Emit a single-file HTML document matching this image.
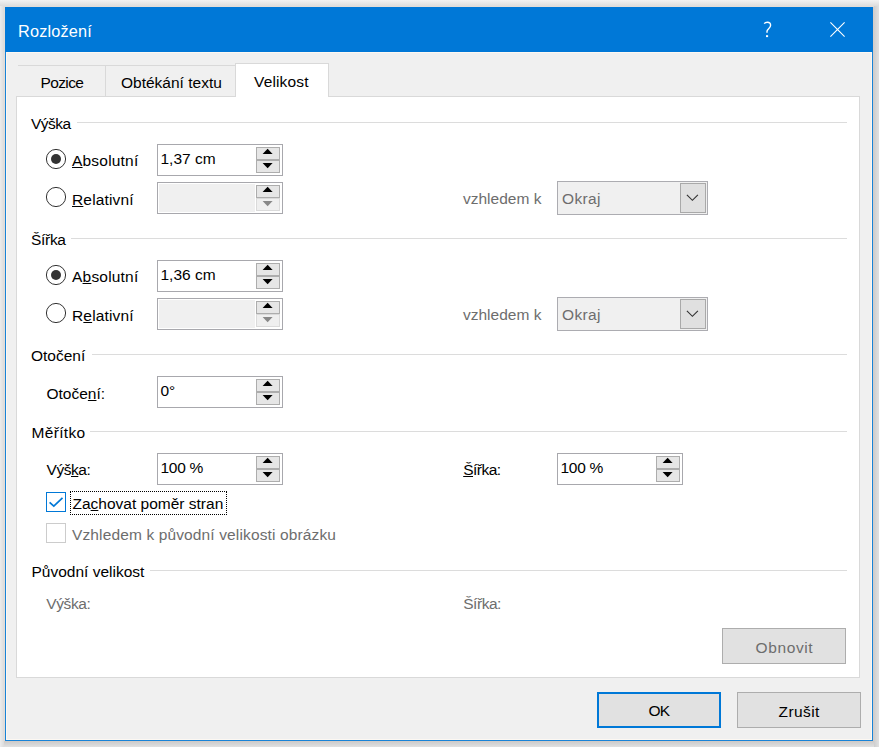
<!DOCTYPE html>
<html><head><meta charset="utf-8"><style>
html,body{margin:0;padding:0;}
body{width:879px;height:747px;position:relative;overflow:hidden;background:#efefef;font-family:"Liberation Sans",sans-serif;}
.t{position:absolute;white-space:nowrap;}
.b{position:absolute;}
u{text-decoration:underline;text-underline-offset:1px;text-decoration-thickness:1px;}
</style></head><body>
<div class="b" style="left:0px;top:0px;width:879px;height:6px;background:linear-gradient(to bottom,#f2f2f2,#dddddd);"></div>
<div class="b" style="left:0px;top:6px;width:4px;height:741px;background:linear-gradient(to right,#ececec,#dcdcdc);"></div>
<div class="b" style="left:874px;top:6px;width:5px;height:741px;background:linear-gradient(to right,#cfcfcf,#e1e1e1);"></div>
<div class="b" style="left:4px;top:742px;width:870px;height:5px;background:linear-gradient(to bottom,#cecece,#e0e0e0);"></div>
<div class="b" style="left:4px;top:6px;width:870px;height:736px;background:#e3ddd8;"></div>
<div class="b" style="left:873px;top:7px;width:1px;height:735px;background:#d5cdc8;"></div>
<div class="b" style="left:4px;top:741px;width:870px;height:1px;background:#d3cbc6;"></div>
<div class="b" style="left:5px;top:7px;width:868px;height:734px;background:#1883d7;"></div>
<div class="b" style="left:5px;top:7px;width:868px;height:45px;background:#0078d7;"></div>
<div class="b" style="left:6px;top:52px;width:866px;height:688px;background:#fdf8f2;"></div>
<div class="b" style="left:7px;top:53px;width:864px;height:686px;background:#f0f0f0;"></div>
<div class="t" style="left:18.00px;top:23.16px;font-size:16.3px;line-height:16.3px;color:#fff;letter-spacing:0.17px;">Rozložení</div>
<svg class="b" style="left:756px;top:18px" width="24" height="24" viewBox="0 0 24 24"><path d="M8.2 5.7 C9 4.6 10.1 4.2 11.3 4.2 C13.2 4.2 14.6 5.5 14.6 7.3 C14.6 9.2 13.3 10.2 12.2 11.2 C11.3 12 11 12.7 11 13.6 L11 14.7" fill="none" stroke="#fff" stroke-width="1.4"/><rect x="10" y="17.2" width="2.1" height="1.9" fill="#fff"/></svg>
<svg class="b" style="left:829px;top:21px" width="18" height="18" viewBox="0 0 18 18"><path d="M1.4 1.4 L15.6 15.6 M15.6 1.4 L1.4 15.6" stroke="#fff" stroke-width="1.1"/></svg>
<div class="b" style="left:18px;top:65px;width:218px;height:1px;background:#d9d9d9;"></div>
<div class="b" style="left:105px;top:65px;width:1px;height:32px;background:#d9d9d9;"></div>
<div class="b" style="left:16px;top:96px;width:844px;height:582px;background:#fff;box-sizing:border-box;border:1px solid #d9d9d9;"></div>
<div class="b" style="left:235px;top:63px;width:94px;height:34px;background:#fff;box-sizing:border-box;border:1px solid #d9d9d9;border-bottom:none;"></div>
<div class="b" style="left:236px;top:96px;width:92px;height:2px;background:#fff;"></div>
<div class="t" style="left:40.50px;top:74.63px;font-size:15.5px;line-height:15.5px;color:#000;letter-spacing:-0.62px;">Pozice</div>
<div class="t" style="left:121.00px;top:74.63px;font-size:15.5px;line-height:15.5px;color:#000;">Obtékání textu</div>
<div class="t" style="left:254.00px;top:73.83px;font-size:15.5px;line-height:15.5px;color:#000;letter-spacing:0.15px;">Velikost</div>
<div class="t" style="left:31.00px;top:116.23px;font-size:15.5px;line-height:15.5px;color:#000;letter-spacing:-0.5px;">Výška</div>
<div class="b" style="left:77px;top:122px;width:770px;height:1px;background:#dcdcdc;"></div>
<svg class="b" style="left:45px;top:148px" width="22" height="22" viewBox="0 0 22 22"><circle cx="11" cy="11" r="9.6" fill="#fff" stroke="#333" stroke-width="1"/><circle cx="11" cy="11" r="5" fill="#333"/></svg>
<svg class="b" style="left:45px;top:186px" width="22" height="22" viewBox="0 0 22 22"><circle cx="11" cy="11" r="9.6" fill="#fff" stroke="#333" stroke-width="1"/></svg>
<div class="t" style="left:72.00px;top:153.43px;font-size:15.5px;line-height:15.5px;color:#000;letter-spacing:0.2px;"><u>A</u>bsolutní</div>
<div class="t" style="left:72.00px;top:191.63px;font-size:15.5px;line-height:15.5px;color:#000;letter-spacing:0.16px;"><u>R</u>elativní</div>
<div class="b" style="left:157px;top:144px;width:126px;height:32px;background:#fff;box-sizing:border-box;border:1px solid #a8a8ad;"></div>
<div class="b" style="left:256px;top:147px;width:24px;height:13px;background:#e6e6e6;box-sizing:border-box;border:1px solid #adadad;"></div>
<div class="b" style="left:256px;top:160px;width:24px;height:13px;background:#e6e6e6;box-sizing:border-box;border:1px solid #adadad;"></div>
<svg class="b" style="left:256px;top:144px" width="24" height="32" viewBox="0 0 24 32"><path d="M6.6 10.1 L11.6 4.8 L16.6 10.1 Z" fill="#000"/><path d="M6.6 19 L16.6 19 L11.6 24.3 Z" fill="#000"/></svg>
<div class="t" style="left:160.50px;top:150.93px;font-size:15.5px;line-height:15.5px;color:#000;">1,37 cm</div>
<div class="b" style="left:157px;top:182px;width:126px;height:32px;background:#fff;box-sizing:border-box;border:1px solid #a8a8ad;"></div>
<div class="b" style="left:159px;top:184px;width:96px;height:28px;background:#f0f0f0;"></div>
<div class="b" style="left:256px;top:185px;width:24px;height:13px;background:#e6e6e6;box-sizing:border-box;border:1px solid #adadad;"></div>
<div class="b" style="left:256px;top:198px;width:24px;height:13px;background:#efefef;box-sizing:border-box;border:1px solid #dadada;"></div>
<svg class="b" style="left:256px;top:182px" width="24" height="32" viewBox="0 0 24 32"><path d="M6.6 10.1 L11.6 4.8 L16.6 10.1 Z" fill="#000"/><path d="M6.6 19 L16.6 19 L11.6 24.3 Z" fill="#888"/></svg>
<div class="t" style="left:463.00px;top:190.73px;font-size:15.5px;line-height:15.5px;color:#6d6d6d;">vzhledem k</div>
<div class="b" style="left:557px;top:181px;width:151px;height:34px;background:#f0f0f0;box-sizing:border-box;border:1px solid #acacb1;"></div>
<div class="b" style="left:680px;top:183px;width:26px;height:30px;background:#e0e0e0;box-sizing:border-box;border:1px solid #a9a9a9;"></div>
<svg class="b" style="left:680px;top:181px" width="26" height="34" viewBox="0 0 26 34"><path d="M6.9 13.9 L12.4 19.3 L17.9 13.9" fill="none" stroke="#333" stroke-width="1.15"/></svg>
<div class="t" style="left:562.00px;top:190.83px;font-size:15.5px;line-height:15.5px;color:#6d6d6d;letter-spacing:0.37px;">Okraj</div>
<div class="t" style="left:31.00px;top:232.23px;font-size:15.5px;line-height:15.5px;color:#000;letter-spacing:-0.3px;">Šířka</div>
<div class="b" style="left:71px;top:238px;width:776px;height:1px;background:#dcdcdc;"></div>
<svg class="b" style="left:45px;top:264px" width="22" height="22" viewBox="0 0 22 22"><circle cx="11" cy="11" r="9.6" fill="#fff" stroke="#333" stroke-width="1"/><circle cx="11" cy="11" r="5" fill="#333"/></svg>
<svg class="b" style="left:45px;top:302px" width="22" height="22" viewBox="0 0 22 22"><circle cx="11" cy="11" r="9.6" fill="#fff" stroke="#333" stroke-width="1"/></svg>
<div class="t" style="left:72.00px;top:269.43px;font-size:15.5px;line-height:15.5px;color:#000;letter-spacing:0.2px;">A<u>b</u>solutní</div>
<div class="t" style="left:72.00px;top:307.63px;font-size:15.5px;line-height:15.5px;color:#000;letter-spacing:0.16px;">R<u>e</u>lativní</div>
<div class="b" style="left:157px;top:260px;width:126px;height:32px;background:#fff;box-sizing:border-box;border:1px solid #a8a8ad;"></div>
<div class="b" style="left:256px;top:263px;width:24px;height:13px;background:#e6e6e6;box-sizing:border-box;border:1px solid #adadad;"></div>
<div class="b" style="left:256px;top:276px;width:24px;height:13px;background:#e6e6e6;box-sizing:border-box;border:1px solid #adadad;"></div>
<svg class="b" style="left:256px;top:260px" width="24" height="32" viewBox="0 0 24 32"><path d="M6.6 10.1 L11.6 4.8 L16.6 10.1 Z" fill="#000"/><path d="M6.6 19 L16.6 19 L11.6 24.3 Z" fill="#000"/></svg>
<div class="t" style="left:160.50px;top:266.93px;font-size:15.5px;line-height:15.5px;color:#000;">1,36 cm</div>
<div class="b" style="left:157px;top:298px;width:126px;height:32px;background:#fff;box-sizing:border-box;border:1px solid #a8a8ad;"></div>
<div class="b" style="left:159px;top:300px;width:96px;height:28px;background:#f0f0f0;"></div>
<div class="b" style="left:256px;top:301px;width:24px;height:13px;background:#e6e6e6;box-sizing:border-box;border:1px solid #adadad;"></div>
<div class="b" style="left:256px;top:314px;width:24px;height:13px;background:#efefef;box-sizing:border-box;border:1px solid #dadada;"></div>
<svg class="b" style="left:256px;top:298px" width="24" height="32" viewBox="0 0 24 32"><path d="M6.6 10.1 L11.6 4.8 L16.6 10.1 Z" fill="#000"/><path d="M6.6 19 L16.6 19 L11.6 24.3 Z" fill="#888"/></svg>
<div class="t" style="left:463.00px;top:306.73px;font-size:15.5px;line-height:15.5px;color:#6d6d6d;">vzhledem k</div>
<div class="b" style="left:557px;top:297px;width:151px;height:34px;background:#f0f0f0;box-sizing:border-box;border:1px solid #acacb1;"></div>
<div class="b" style="left:680px;top:299px;width:26px;height:30px;background:#e0e0e0;box-sizing:border-box;border:1px solid #a9a9a9;"></div>
<svg class="b" style="left:680px;top:297px" width="26" height="34" viewBox="0 0 26 34"><path d="M6.9 13.9 L12.4 19.3 L17.9 13.9" fill="none" stroke="#333" stroke-width="1.15"/></svg>
<div class="t" style="left:562.00px;top:306.83px;font-size:15.5px;line-height:15.5px;color:#6d6d6d;letter-spacing:0.37px;">Okraj</div>
<div class="t" style="left:31.00px;top:348.23px;font-size:15.5px;line-height:15.5px;color:#000;">Otočení</div>
<div class="b" style="left:92px;top:354px;width:755px;height:1px;background:#dcdcdc;"></div>
<div class="t" style="left:46.50px;top:385.53px;font-size:15.5px;line-height:15.5px;color:#000;">Otoče<u>n</u>í:</div>
<div class="b" style="left:157px;top:376px;width:126px;height:32px;background:#fff;box-sizing:border-box;border:1px solid #a8a8ad;"></div>
<div class="b" style="left:256px;top:379px;width:24px;height:13px;background:#e6e6e6;box-sizing:border-box;border:1px solid #adadad;"></div>
<div class="b" style="left:256px;top:392px;width:24px;height:13px;background:#e6e6e6;box-sizing:border-box;border:1px solid #adadad;"></div>
<svg class="b" style="left:256px;top:376px" width="24" height="32" viewBox="0 0 24 32"><path d="M6.6 10.1 L11.6 4.8 L16.6 10.1 Z" fill="#000"/><path d="M6.6 19 L16.6 19 L11.6 24.3 Z" fill="#000"/></svg>
<div class="t" style="left:160.50px;top:382.93px;font-size:15.5px;line-height:15.5px;color:#000;">0°</div>
<div class="t" style="left:31.50px;top:425.13px;font-size:15.5px;line-height:15.5px;color:#000;letter-spacing:0.32px;">Měřítko</div>
<div class="b" style="left:90px;top:431px;width:757px;height:1px;background:#dcdcdc;"></div>
<div class="t" style="left:46.50px;top:461.83px;font-size:15.5px;line-height:15.5px;color:#000;letter-spacing:-0.45px;">Výš<u>k</u>a:</div>
<div class="b" style="left:157px;top:453px;width:126px;height:32px;background:#fff;box-sizing:border-box;border:1px solid #a8a8ad;"></div>
<div class="b" style="left:256px;top:456px;width:24px;height:13px;background:#e6e6e6;box-sizing:border-box;border:1px solid #adadad;"></div>
<div class="b" style="left:256px;top:469px;width:24px;height:13px;background:#e6e6e6;box-sizing:border-box;border:1px solid #adadad;"></div>
<svg class="b" style="left:256px;top:453px" width="24" height="32" viewBox="0 0 24 32"><path d="M6.6 10.1 L11.6 4.8 L16.6 10.1 Z" fill="#000"/><path d="M6.6 19 L16.6 19 L11.6 24.3 Z" fill="#000"/></svg>
<div class="t" style="left:160.50px;top:459.93px;font-size:15.5px;line-height:15.5px;color:#000;letter-spacing:-0.3px;">100 %</div>
<div class="t" style="left:463.20px;top:461.83px;font-size:15.5px;line-height:15.5px;color:#000;letter-spacing:-0.5px;"><u>Š</u>ířka:</div>
<div class="b" style="left:557px;top:453px;width:126px;height:32px;background:#fff;box-sizing:border-box;border:1px solid #a8a8ad;"></div>
<div class="b" style="left:656px;top:456px;width:24px;height:13px;background:#e6e6e6;box-sizing:border-box;border:1px solid #adadad;"></div>
<div class="b" style="left:656px;top:469px;width:24px;height:13px;background:#e6e6e6;box-sizing:border-box;border:1px solid #adadad;"></div>
<svg class="b" style="left:656px;top:453px" width="24" height="32" viewBox="0 0 24 32"><path d="M6.6 10.1 L11.6 4.8 L16.6 10.1 Z" fill="#000"/><path d="M6.6 19 L16.6 19 L11.6 24.3 Z" fill="#000"/></svg>
<div class="t" style="left:560.50px;top:459.93px;font-size:15.5px;line-height:15.5px;color:#000;letter-spacing:-0.3px;">100 %</div>
<div class="b" style="left:46px;top:492px;width:20px;height:20px;background:#fff;box-sizing:border-box;border:1px solid #0078d7;"></div>
<svg class="b" style="left:46px;top:492px" width="20" height="20" viewBox="0 0 20 20"><path d="M3.6 10.3 L7.8 14.1 L16.5 5.8" fill="none" stroke="#0078d7" stroke-width="1.7"/></svg>
<div class="b" style="left:70px;top:491px;width:157px;height:24px;box-sizing:border-box;border:1px dotted #000;"></div>
<div class="t" style="left:72.50px;top:495.83px;font-size:15.5px;line-height:15.5px;color:#000;">Za<u>c</u>hovat poměr stran</div>
<div class="b" style="left:46px;top:523px;width:20px;height:20px;background:#fff;box-sizing:border-box;border:1px solid #cccccc;"></div>
<div class="t" style="left:72.00px;top:526.93px;font-size:15.5px;line-height:15.5px;color:#6d6d6d;letter-spacing:0.13px;">Vzhledem k původní velikosti obrázku</div>
<div class="t" style="left:31.50px;top:563.53px;font-size:15.5px;line-height:15.5px;color:#000;">Původní velikost</div>
<div class="b" style="left:150px;top:570px;width:697px;height:1px;background:#dcdcdc;"></div>
<div class="t" style="left:46.30px;top:596.03px;font-size:15.5px;line-height:15.5px;color:#6d6d6d;letter-spacing:-0.4px;">Výška:</div>
<div class="t" style="left:463.20px;top:596.03px;font-size:15.5px;line-height:15.5px;color:#6d6d6d;letter-spacing:-0.45px;">Šířka:</div>
<div class="b" style="left:722px;top:628px;width:124px;height:36px;background:#e1e1e1;box-sizing:border-box;border:1px solid #adadad;"></div>
<div class="t" style="left:755.50px;top:639.63px;font-size:15.5px;line-height:15.5px;color:#6d6d6d;letter-spacing:0.62px;">Obnovit</div>
<div class="b" style="left:597px;top:692px;width:124px;height:36px;background:#e1e1e1;box-sizing:border-box;border:2px solid #0078d7;"></div>
<div class="t" style="left:648.50px;top:703.23px;font-size:15.5px;line-height:15.5px;color:#000;letter-spacing:-0.9px;">OK</div>
<div class="b" style="left:737px;top:692px;width:124px;height:36px;background:#e1e1e1;box-sizing:border-box;border:1px solid #adadad;"></div>
<div class="t" style="left:778.50px;top:703.53px;font-size:15.5px;line-height:15.5px;color:#000;letter-spacing:0.42px;">Zrušit</div>
</body></html>
